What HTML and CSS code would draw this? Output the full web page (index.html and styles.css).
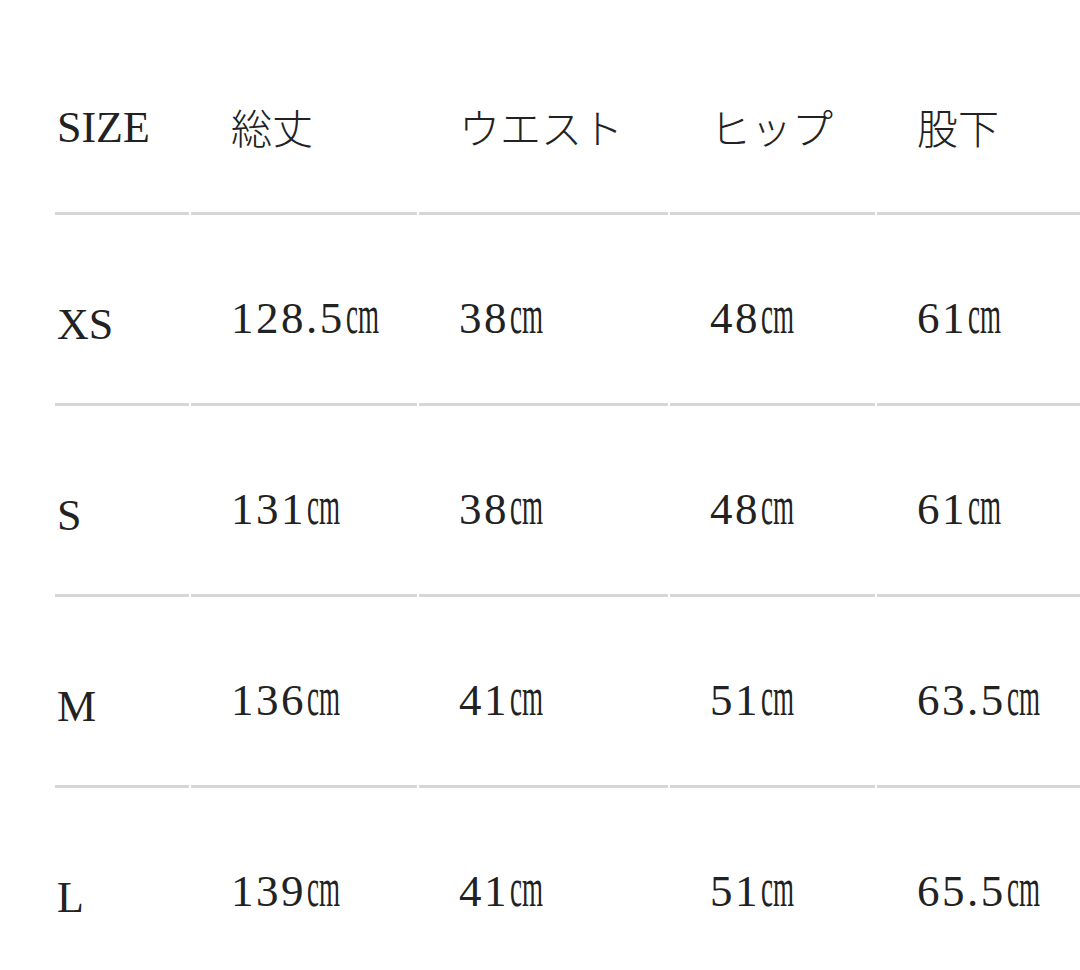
FILE: index.html
```html
<!DOCTYPE html>
<html lang="ja">
<head>
<meta charset="utf-8">
<title>サイズ表</title>
<link rel="stylesheet" href="styles.css">
</head>
<body>
<div class="size-table">
  <div class="cell head size-col">SIZE</div>
  <div class="cell head jp">総丈</div>
  <div class="cell head jp">ウエスト</div>
  <div class="cell head jp">ヒップ</div>
  <div class="cell head jp">股下</div>

  <div class="cell size-col">XS</div>
  <div class="cell num">128.5<span class="cm">cm</span></div>
  <div class="cell num">38<span class="cm">cm</span></div>
  <div class="cell num">48<span class="cm">cm</span></div>
  <div class="cell num">61<span class="cm">cm</span></div>

  <div class="cell size-col">S</div>
  <div class="cell num">131<span class="cm">cm</span></div>
  <div class="cell num">38<span class="cm">cm</span></div>
  <div class="cell num">48<span class="cm">cm</span></div>
  <div class="cell num">61<span class="cm">cm</span></div>

  <div class="cell size-col">M</div>
  <div class="cell num">136<span class="cm">cm</span></div>
  <div class="cell num">41<span class="cm">cm</span></div>
  <div class="cell num">51<span class="cm">cm</span></div>
  <div class="cell num">63.5<span class="cm">cm</span></div>

  <div class="cell size-col last">L</div>
  <div class="cell num last">139<span class="cm">cm</span></div>
  <div class="cell num last">41<span class="cm">cm</span></div>
  <div class="cell num last">51<span class="cm">cm</span></div>
  <div class="cell num last">65.5<span class="cm">cm</span></div>
</div>
</body>
</html>
```

FILE: styles.css
```css
html, body {
  margin: 0;
  padding: 0;
  background: #ffffff;
  overflow: hidden;
}

.size-table {
  display: grid;
  grid-template-columns: 134px 226px 249px 205px 203px;
  grid-template-rows: 215px repeat(4, 191px);
  column-gap: 2px;
  padding-left: 55px;
  color: #222222;
  font-family: "Liberation Serif", "Noto Sans CJK JP", serif;
  font-size: 45px;
  line-height: 45px;
}

.cell {
  box-sizing: border-box;
  border-bottom: 3px solid #d6d6d6;
  padding-left: 40px;
  padding-top: 78px;
  white-space: nowrap;
}

.cell.last {
  border-bottom: none;
}

.size-col {
  padding-left: 2px;
  padding-top: 87px;
  font-size: 44px;
}

.head {
  padding-top: 105px;
}

.head.jp {
  font-family: "Noto Sans CJK JP", sans-serif;
  font-weight: 300;
  font-size: 41px;
  padding-top: 104px;
}

.num {
  letter-spacing: 2.5px;
}

.cm {
  display: inline-block;
  font-size: 54px;
  line-height: 45px;
  letter-spacing: 0;
  transform: scaleX(0.5);
  transform-origin: left center;
  margin-right: -33px;
  margin-left: 1px;
}
```
